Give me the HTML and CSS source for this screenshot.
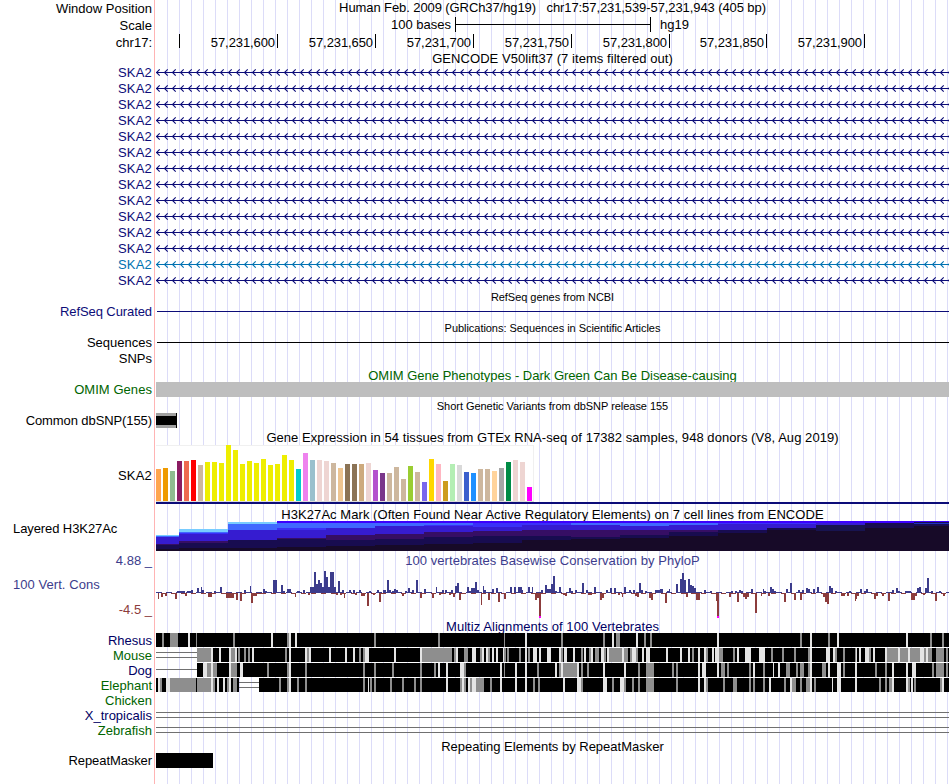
FILE: index.html
```
<!DOCTYPE html>
<html lang="en">
<head>
  <meta charset="UTF-8" />
  <meta name="viewport" content="width=device-width, initial-scale=1.0"/>
  <title>chr17:57,231,539-57,231,943 hg19</title>
  <link rel="stylesheet" href="styles.css">
</head>
<body>
<div class="browser">
  <div class="row ruler first"><span class="label">Window Position</span><div class="track title tight">Human Feb. 2009 (GRCh37/hg19) &nbsp; chr17:57,231,539-57,231,943 (405 bp)</div></div>
  <div class="row ruler"><span class="label">Scale</span><div class="track scale"><span class="scale-text">100 bases</span><span class="scale-bar"></span><span>hg19</span></div></div>
  <div class="row ruler">
    <span class="label">chr17:</span>
    <div class="track ticks tight">
      <span></span><span>57,231,600</span><span>57,231,650</span><span>57,231,700</span><span>57,231,750</span><span>57,231,800</span><span class="narrow">57,231,850</span><span>57,231,900</span>
    </div>
  </div>
  <div class="row heading gencode"><div class="track title wide">GENCODE V50lift37 (7 items filtered out)</div></div>
  <div id="genes"></div>

  <div class="row heading"><div class="track title small">RefSeq genes from NCBI</div></div>
  <div class="row h15"><span class="label navy tight">RefSeq Curated</span><div class="track line navy"></div></div>
  <div class="row heading"><div class="track title small">Publications: Sequences in Scientific Articles</div></div>
  <div class="row h15"><span class="label">Sequences</span><div class="track line"></div></div>
  <div class="row snps"><span class="label">SNPs</span></div>

  <div class="row heading omim-title"><div class="track title green">OMIM Gene Phenotypes - Dark Green Can Be Disease-causing</div></div>
  <div class="row h15"><span class="label green wide">OMIM Genes</span><div class="track omim"></div></div>
  <div class="row heading"><div class="track title small">Short Genetic Variants from dbSNP release 155</div></div>
  <div class="row h15"><span class="label tight">Common dbSNP(155)</span><div class="track"><div class="snp"></div></div></div>

  <div class="row heading expression-title"><div class="track title wide">Gene Expression in 54 tissues from GTEx RNA-seq of 17382 samples, 948 donors (V8, Aug 2019)</div></div>
  <div class="row gtex"><span class="label gene">SKA2</span><div class="track"><svg id="gtex" width="793" height="59"></svg></div></div>
  <div class="row heading h3k-title"><div class="track title wide">H3K27Ac Mark (Often Found Near Active Regulatory Elements) on 7 cell lines from ENCODE</div></div>
  <div class="row h3k"><span class="label left tight">Layered H3K27Ac</span><div class="track"><svg id="h3k" width="793" height="30"></svg></div></div>

  <div class="row phylo">
    <div class="label phylo-label"><span class="blue">4.88 _</span><span class="blue left wide">100 Vert. Cons</span><span class="red">-4.5 _</span></div>
    <div class="track"><div class="title blue wide">100 vertebrates Basewise Conservation by PhyloP</div><svg id="phylo" width="793" height="50"></svg></div>
  </div>
  <div class="row heading multiz-title"><div class="track title navy2 wide">Multiz Alignments of 100 Vertebrates</div></div>
  <div id="multiz"></div>

  <div class="row heading repeat-title"><div class="track title">Repeating Elements by RepeatMasker</div></div>
  <div class="row h15"><span class="label tight">RepeatMasker</span><div class="track"><div class="repeat"></div></div></div>
</div>
<script src="tracks.js"></script>
</body>
</html>
```
FILE: styles.css
```
* { box-sizing: border-box; }
body {
  margin: 0;
  background: #fff;
  color: #000;
  font-family: "Liberation Sans", Arial, sans-serif;
  font-size: 13px;
}
.browser {
  width: 949px;
  height: 784px;
  overflow: hidden;
  background:
    linear-gradient(#ffb4b4, #ffb4b4) 154px 0 / 1px 100% no-repeat,
    repeating-linear-gradient(to right, #dcdcf8 0, #dcdcf8 1px, transparent 1px, transparent 12px) 167px 0 / 782px 100% no-repeat;
}
.row {
  display: grid;
  grid-template-columns: 152px 793px;
  column-gap: 4px;
  height: 16px;
  line-height: 16px;
  white-space: nowrap;
}
.track { grid-column: 2; height: 100%; min-width: 0; }
.label { text-align: right; }
.left { text-align: left; padding-left: 13px; }
.title { text-align: center; }
.small { font-size: 11px; letter-spacing: -0.04px; }
.tight { letter-spacing: -0.09px; }
.wide { letter-spacing: 0.055px; }
.gene { letter-spacing: 0.2px; line-height: 18px; }
svg { display: block; shape-rendering: crispEdges; }

.navy { color: #0c0c78; }
.navy2 { color: #000064; }
.green { color: #006400; }
.blue { color: #3c3c8c; }
.red { color: #8c3c3c; }
.alt { color: #0072b2; }

.ruler { height: 17px; line-height: 17px; }
.first .title { line-height: 15px; }
.scale { display: flex; line-height: 16px; }
.scale-text { width: 295px; text-align: right; margin-right: 4px; }
.scale-bar {
  width: 196px;
  height: 15px;
  margin-right: 9px;
  border-left: 1px solid #000;
  border-right: 1px solid #000;
  background: linear-gradient(#000, #000) 0 7px / 100% 1px no-repeat;
}
.ticks { display: flex; }
.ticks span {
  width: 98px;
  height: 14px;
  padding-right: 2px;
  border-right: 1px solid #000;
  text-align: right;
  line-height: 17px;
}
.ticks span:first-child { width: 24px; }
.ticks .narrow { width: 97px; }

.heading { height: 16px; line-height: 18px; }
.gencode { height: 13px; line-height: 15px; }
.omim-title { line-height: 20px; }
.h15 { height: 15px; line-height: 15px; }
.line { background: linear-gradient(currentColor, currentColor) 1px 7px / 792px 1px no-repeat; }
.snps { height: 16px; line-height: 18px; }
.omim { background: #bebebe; }
.snp {
  width: 21px;
  height: 15px;
  border-right: 1px solid #000;
  background: linear-gradient(#000, #000) 0 3px / 100% 9px no-repeat #a0a0a0;
}
.expression-title { height: 17px; line-height: 19px; }
.gtex { height: 59px; }
.gtex .gene { line-height: 61px; }
.h3k-title { height: 17px; line-height: 22px; }
.h3k { height: 30px; line-height: 16px; }
.phylo { height: 67px; line-height: 19px; }
.phylo .title { height: 17px; line-height: 20px; }
.phylo-label { display: grid; grid-template-rows: 24px 25px 18px; }
.phylo-label .left { line-height: 20px; }
.phylo-label .red { line-height: 20px; }
.multiz-title { height: 15px; line-height: 18px; }
.repeat-title { height: 15px; }
.repeat { width: 57px; height: 15px; background: #000; }
```
FILE: tracks.js
```
const W = 793;

function rect(x, y, w, h, fill) {
  return `<rect x="${x}" y="${y}" width="${w}" height="${h}" fill="${fill}"/>`;
}

// GENCODE transcripts, all on the minus strand
let arrows = "";
for (let x = 0; x < W; x += 8) {
  arrows += `M${x + 3.7} 5.3L${x + 0.5} 8.5L${x + 3.7} 11.7`;
}
let genes = "";
for (let i = 0; i < 14; i++) {
  const cls = i === 12 ? "alt" : "navy";
  genes += `<div class="row"><span class="label gene ${cls}">SKA2</span><div class="track ${cls}">
    <svg width="${W}" height="16" stroke="currentColor" fill="none"><path d="M0 8.5H${W}"/><path d="${arrows}" stroke-width="1.1" shape-rendering="geometricPrecision"/></svg></div></div>`;
}
document.getElementById("genes").innerHTML = genes;

// GTEx: color, height
const tissues = [
  ["#ffa54f", 32], ["#ee9a00", 33], ["#8fbc8f", 30], ["#8b1c62", 40], ["#ee6a50", 40], ["#ff0000", 41],
  ["#cdb79e", 36], ["#eeee00", 39], ["#eeee00", 39], ["#eeee00", 38], ["#eeee00", 56], ["#eeee00", 51],
  ["#eeee00", 37], ["#eeee00", 40], ["#eeee00", 38], ["#eeee00", 42], ["#eeee00", 36], ["#eeee00", 37],
  ["#eeee00", 46], ["#eeee00", 41], ["#00cdcd", 32], ["#ee82ee", 48], ["#9ac0cd", 41], ["#eed5d2", 41],
  ["#eed5d2", 40], ["#cdb79e", 38], ["#eec591", 33], ["#8b7355", 37], ["#8b7355", 37], ["#cdaa7d", 37],
  ["#eed5d2", 38], ["#b452cd", 31], ["#7a378b", 28], ["#cdb79e", 28], ["#cdb79e", 34], ["#cdb79e", 22],
  ["#9acd32", 35], ["#cdb79e", 29], ["#7a67ee", 19], ["#ffd700", 42], ["#ffb6c1", 37], ["#cd9b1d", 20],
  ["#b4eeb4", 37], ["#d9d9d9", 36], ["#3a5fcd", 29], ["#1e90ff", 28], ["#cdb79e", 32], ["#cdb79e", 32],
  ["#ffd39b", 30], ["#a6a6a6", 33], ["#008b45", 39], ["#eed5d2", 41], ["#eed5d2", 39], ["#ff00ff", 14]
];
let bars = rect(0, 0, 378, 57, "#f0f0f0") + rect(0, 1, 377, 55, "#fff") + rect(0, 56, 378, 1, "#dcdcdc");
tissues.forEach(([color, h], i) => {
  bars += rect(i * 7, 56 - h, 5, h, color);
});
bars += rect(0, 57, W, 2, "#0c0c78");
document.getElementById("gtex").innerHTML = bars;

// Layered H3K27Ac: start x, then the top of each layer with its color
const V = "#3c00ff", S = "#78ccff", B = "#4068ff", M = "#3a30f8", R = "#361cd0", P = "#360e64", N = "#180c50", D = "#170a28";
const h3k = [
  [0, 14, S, 15, B, 16, R, 23, P, 24, N, 28, D],
  [23, 8, S, 11, B, 12, M, 13, R, 20, P, 22, N, 27, D],
  [72, 1, S, 3, B, 9, R, 19, N, 27, D],
  [121, 0, V, 2, B, 7, M, 9, R, 17, P, 18, N, 26, D],
  [170, 0, V, 2, B, 7, R, 14, P, 19, N, 25, D],
  [219, 0, V, 2, B, 5, R, 13, P, 18, N, 24, D],
  [268, 0, V, 2, B, 4, M, 5, R, 11, P, 16, N, 23, D],
  [317, 0, V, 2, M, 6, R, 10, P, 15, N, 22, D],
  [366, 0, V, 2, M, 4, R, 9, P, 15, N, 19, D],
  [415, 0, V, 2, B, 4, R, 9, P, 16, N, 18, D],
  [464, 0, V, 2, B, 5, R, 9, P, 14, N, 17, D],
  [513, 0, V, 2, B, 4, R, 9, P, 11, N, 15, D],
  [562, 0, V, 2, M, 3, R, 9, N, 12, D],
  [611, 0, V, 2, M, 3, R, 7, N, 9, D],
  [660, 0, V, 2, R, 4, "#181450", 10, D],
  [709, 0, V, 2, N, 7, D],
  [758, 0, V, 1, N, 2, "#1a30c0", 3, N, 5, D]
];
let layers = "";
h3k.forEach((col, i) => {
  const end = i + 1 < h3k.length ? h3k[i + 1][0] : W;
  for (let k = 1; k < col.length; k += 2) {
    layers += rect(col[0], col[k], end - col[0], 30 - col[k], col[k + 1]);
  }
});
document.getElementById("h3k").innerHTML = layers;

// PhyloP scores: x, width, height (negative goes below the line)
const scores = `0 1 1,2 1 -6,5 2 -4,9 2 -3,19 2 -6,21 8 2,29 2 -3,31 6 2,35 2 3,41 2 5,45 1 6,46 2 3,52 4 -4,58 2 2,64 2 6,
70 8 -5,80 2 -7,84 2 -8,88 2 3,94 1 7,95 2 -10,97 4 -3,101 6 -1,107 2 4,109 2 2,117 4 13,125 2 8,127 2 2,131 4 4,139 1 -4,
141 3 2,147 2 3,152 2 -2,154 4 6,158 2 21,160 2 9,162 2 13,164 2 10,166 2 6,168 2 22,170 2 16,172 2 6,174 4 21,178 2 6,180 2 -2,
182 2 12,184 2 -2,186 2 3,188 1 -5,193 2 3,197 2 3,199 2 -2,203 2 3,205 4 -3,211 2 -13,213 2 2,217 2 -2,221 2 3,223 2 -9,
227 3 3,231 2 13,233 2 3,236 2 2,238 2 4,240 2 3,246 2 -3,249 2 2,252 2 5,256 2 3,260 2 13,264 2 -5,268 2 4,276 2 -5,280 1 6,
283 2 -2,286 2 3,289 2 3,293 2 -2,295 2 3,297 2 -4,299 2 7,301 2 10,303 2 -7,311 2 6,313 2 2,315 4 5,319 2 11,321 2 3,325 1 -12,
327 1 7,328 2 3,332 2 -7,336 2 4,340 2 5,342 2 -9,348 2 -6,354 2 6,358 2 6,362 4 6,366 1 3,372 2 6,376 1 6,379 2 -7,381 2 -5,
383 2 -23,385 2 3,389 2 8,391 4 4,395 2 9,397 2 17,399 2 2,403 2 6,407 4 -2,409 2 -3,413 2 5,415 2 2,419 2 3,426 2 10,430 2 3,
432 4 -2,438 2 6,444 2 -7,446 2 -5,450 2 3,454 2 5,458 2 5,462 2 -2,466 1 -4,468 2 6,473 2 3,477 2 3,479 2 -3,481 2 -4,483 2 10,
485 2 3,489 2 2,493 2 -5,495 2 -7,499 5 3,504 3 4,509 2 -10,511 2 2,513 1 4,520 2 9,522 2 1,524 2 14,526 2 20,528 2 13,530 2 -4,
532 2 14,534 2 8,536 2 7,538 2 5,540 4 -7,548 2 3,554 2 2,560 1 -8,561 2 -23,573 2 -4,575 2 2,579 2 2,581 2 -9,583 2 3,585 2 2,
587 6 -4,589 2 -6,595 2 4,599 2 -20,605 1 -3,607 1 4,608 2 2,612 2 -3,614 2 6,616 2 4,618 2 2,628 2 -9,630 2 4,634 2 10,638 2 -7,
642 2 3,644 2 -7,646 2 3,650 2 5,652 2 4,657 2 4,661 2 6,667 2 -4,669 2 -9,671 2 -11,673 2 7,675 2 5,679 2 2,685 4 -3,691 2 -3,
693 2 2,699 1 -8,700 1 -6,701 2 -3,704 2 4,708 2 2,710 2 4,718 2 -6,720 2 -3,726 2 -3,732 2 -8,736 2 3,740 2 5,742 2 2,749 6 2,
755 4 -7,759 2 -3,761 2 5,763 2 6,767 2 -2,769 2 5,771 2 15,775 2 2,779 2 -8,783 2 2,787 2 -3`;
let wiggle = "";
for (let x = 0; x < W; x += 10) {
  wiggle += rect(x, 24, 6, 1, "#3c3c8c") + rect(x + 5, 25, 5, 1, "#8c3c3c");
}
scores.split(",").forEach(s => {
  const [x, w, h] = s.trim().split(" ").map(Number);
  wiggle += h > 0 ? rect(x, 25 - h, w, h, "#3c3c8c") : rect(x, 25, w, -h, "#8c3c3c");
  // clipped below the view range
  if (h === -23) wiggle += rect(x, 48, 2, 2, "#ff00ff");
});
document.getElementById("phylo").innerHTML = wiggle;

// Multiz: g = partly conserved, w = weak, b = black, each followed by x and optional width
const species = [
  ["Rhesus", "navy2", "b0.793 g6 g14.8 w32 g40.1 g77 w115 g131 w133 w139 g218 g282 g348.1 w369 g405 g447 w456 g460.4 w480 g488 g494 w561 g644 w654 g672 w681 w750 g774 g786"],
  ["Mouse", "green", "d0.41 b41.752 g41.14 w55 w63 w73 g75.4 w79 g82 g88 g92 w96 g129 w133 w149 g151 w153 w173 w189 w197 g203 g207 w209.4 w238 w264 g266.30 g298 w300 g308.4 w316.4 g324 w326 w330 g332 w336 w340 w347.1 g348 g351 g363 w369 g372 w377.4 w383 w391.4 w403 g405 w408.3 w417 g425 w428 g433 w435 g439.4 w445.3 g448 w451 g453.13 w466 g468.4 g474 w476.4 g480 w486 w490.4 w510 w524 w532 g536 w542 w548 g550 w556 w559.4 g563.4 g577 w581 w589.6 w603.6 g615 g626 g638 g652 w654 w670.4 w677 g679 g687 g699 w700.1 w703 w709.4 g713 w717 w729 g731.11 w742 g744.8 w752 g754.10 w764.4 g768 w770 g772.4 g780.8 g790"],
  ["Dog", "navy2", "s0.41 b41.752 w47.4 g51.4 w55 g57.4 w73 g75.6 w84.3 g111 g131 w133 g149 g207 g218 g236 g264 g278 w282 w290 w304.4 g308 w344 g348.1 w359 w369 g381 w399 g403 w405 g407.14 w421 g425 g431 w447 w468 g482 g490.8 g516 g520 w542 w546.4 w561 g565.4 g571 g593 w597 g607 w617.1 w622 g630.4 g640 g644.4 g652 w654 g666.4 w672 w681.4 g687 w699 g719 g729 w736 w750 w756.4 g776 g780.8 g790"],
  ["Elephant", "green", "b0.83 w2.2 g4.2 g6 b6 w10 w12.2 g14.26 b40.1 g41.14 w55 g57 w61 w67 g71 w73 g77.4 d83.20 b103.690 g123 g131 w133 g141 g149 g207 w212.1 g214 g218 g234 g246 g258 g264 w290 g304 w306 g308 w312 g314 w316.4 g320.8 g334 w344 w359 w369 g377 g382 w407 w421.4 g425 w447.4 g456 w464.4 g468 g476 g482 g490.8 g520 w542 w548 g550 g567 g577.4 g593 g597 g607 w613 g628 w634 g636.4 g644 g650.4 w654 g658 w676.1 w681.4 w699 g723 g729 g733.3 w736 w750 g752 w755 g758 g784 w786"],
  ["Chicken", "green", ""],
  ["X_tropicalis", "navy2", "d0.793"],
  ["Zebrafish", "green", "d0.793"]
];
const shades = { b: "#000", g: "#8e8e8e", w: "#e4e4e4" };
document.getElementById("multiz").innerHTML = species.map(([name, cls, data]) => {
  let blocks = "";
  data.split(" ").filter(Boolean).forEach(item => {
    const [x, w = 2] = item.slice(1).split(".").map(Number);
    if (item[0] === "d") blocks += rect(x, 4, w, 1, "#707070") + rect(x, 9, w, 1, "#707070");
    else if (item[0] === "s") blocks += rect(x, 6, w, 1, "#707070");
    else blocks += rect(x, 0, w, 14, shades[item[0]]);
  });
  // the gap in Elephant has no black behind it
  return `<div class="row h15"><span class="label ${cls}">${name}</span><div class="track"><svg width="${W}" height="15">${blocks}</svg></div></div>`;
}).join("");
```
